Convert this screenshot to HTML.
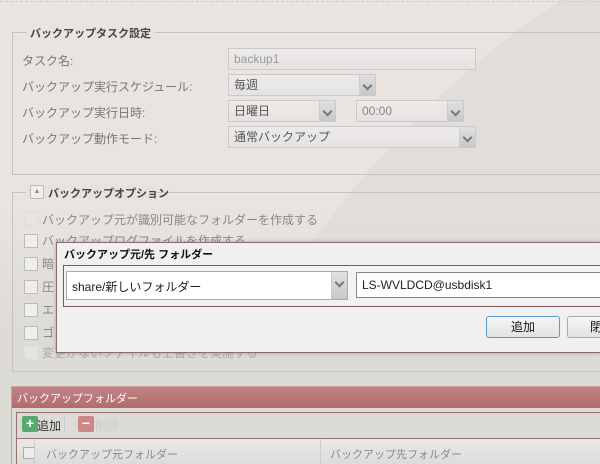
<!DOCTYPE html>
<html style="width:600px;height:464px;overflow:hidden"><head><meta charset="utf-8"><style>
*{box-sizing:border-box;margin:0;padding:0}
body{width:600px;height:464px;overflow:hidden;position:relative;background:#e9e4df;font-family:"Liberation Sans","Noto Sans CJK JP",sans-serif;font-size:12px;color:#777}
.a{position:absolute}
.clip{left:0;top:0;width:600px;height:464px;overflow:hidden}
.gray{left:135px;top:-165px;width:1930px;height:1930px;border-radius:50%;background:#e1ded9;}
.lower{left:0;top:200px;width:600px;height:264px;background:linear-gradient(180deg,rgba(222,220,215,0),#dddbd6 50%)}
.fs{border:1px solid #c8c2bc}
.leg{font-weight:bold;font-size:11px;color:#444;padding:0 4px}
.lab{left:22px;font-size:12px;color:#777}
.inp{background:linear-gradient(#eeeaea,#e4e2e2);border:1px solid #cdc9c6;font-size:12px;color:#555;padding:3px 5px;line-height:14px}
.dd{position:absolute;right:0;top:0;bottom:0;width:16px;background:linear-gradient(#e0e0e0,#c8c8c8);border-left:1px solid #ccc}
.dd:after{content:"";position:absolute;left:4px;top:7px;width:5px;height:5px;border-right:2px solid #777;border-bottom:2px solid #777;transform:rotate(45deg)}
.cb{left:24px;width:14px;height:14px;border:1px solid #bbb;background:#eee}
.ct{left:42px;font-size:12px;color:#888}
</style></head><body>
<div class="a clip"><div class="a gray"></div><div class="a lower"></div></div>
<div class="a" style="left:0;top:1px;width:600px;border-top:1px dashed #ccc"></div>

<div class="a fs" style="left:12px;top:32px;width:588px;height:143px;border-right:none"></div>
<div class="a leg" style="left:26px;top:25px;background:#e9e4df">バックアップタスク設定</div>
<div class="a lab" style="top:52px">タスク名:</div>
<div class="a lab" style="top:78px">バックアップ実行スケジュール:</div>
<div class="a lab" style="top:104px">バックアップ実行日時:</div>
<div class="a lab" style="top:130px">バックアップ動作モード:</div>
<div class="a inp" style="left:228px;top:48px;width:248px;height:22px;color:#999">backup1</div>
<div class="a inp" style="left:228px;top:74px;width:148px;height:22px">毎週<div class="dd"></div></div>
<div class="a inp" style="left:228px;top:100px;width:108px;height:22px">日曜日<div class="dd"></div></div>
<div class="a inp" style="left:356px;top:100px;width:108px;height:22px;color:#888">00:00<div class="dd"></div></div>
<div class="a inp" style="left:228px;top:126px;width:248px;height:22px">通常バックアップ<div class="dd"></div></div>

<div class="a fs" style="left:12px;top:192px;width:588px;height:180px;border-right:none"></div>
<div class="a" style="left:26px;top:185px;width:130px;height:14px;background:#e6e2dd"></div>
<div class="a" style="left:30px;top:185px;width:14px;height:14px;border:1px solid #bbb;background:#eee;font-size:7px;text-align:center;line-height:12px;color:#888">▲</div>
<div class="a leg" style="left:44px;top:185px">バックアップオプション</div>
<div class="a cb" style="top:211px;border-color:#ddd;background:#e6e3e0"></div><div class="a ct" style="top:211px">バックアップ元が識別可能なフォルダーを作成する</div>
<div class="a cb" style="top:234px"></div><div class="a ct" style="top:232px">バックアップログファイルを作成する</div>
<div class="a cb" style="top:257px"></div><div class="a ct" style="top:255px">暗</div>
<div class="a cb" style="top:280px"></div><div class="a ct" style="top:278px">圧</div>
<div class="a cb" style="top:303px"></div><div class="a ct" style="top:301px">エ</div>
<div class="a cb" style="top:326px"></div><div class="a ct" style="top:324px">ゴ</div>
<div class="a cb" style="top:346px;border-color:#ddd;background:#e6e3e0"></div><div class="a ct" style="top:344px;color:#aaa">変更がないファイルも上書きを実施する</div>

<div class="a" style="left:56px;top:242px;width:544px;height:111px;background:#f0f0f0;border:1px solid #8a6a6a;border-right:none;box-shadow:0 0 4px rgba(0,0,0,.25)"></div>
<div class="a" style="left:64px;top:246px;font-size:11px;font-weight:bold;color:#111">バックアップ元/先 フォルダー</div>
<div class="a" style="left:63px;top:265px;width:537px;height:42px;border:1px solid #7a5a5a;border-right:none;background:#f2f2f2"></div>
<div class="a" style="left:66px;top:271px;width:282px;height:29px;border:1px solid #aaa;background:#fff;font-size:12px;color:#222;padding:6px 5px">share/新しいフォルダー<div class="dd" style="width:16px"></div></div>
<div class="a" style="left:356px;top:272px;width:244px;height:26px;border:1px solid #888;border-right:none;background:#fff;font-size:12px;color:#222;padding:5px 5px">LS-WVLDCD@usbdisk1</div>
<div class="a" style="left:486px;top:316px;width:74px;height:22px;border:1px solid #5a9ad0;border-radius:3px;background:linear-gradient(#f6f6f6,#e2e2e2);font-size:12px;color:#111;text-align:center;line-height:20px">追加</div>
<div class="a" style="left:567px;top:316px;width:33px;height:22px;border:1px solid #aaa;border-right:none;border-radius:3px 0 0 3px;background:linear-gradient(#f6f6f6,#e2e2e2);font-size:12px;color:#111;padding-left:22px;line-height:20px;overflow:hidden;white-space:nowrap">閉</div>

<div class="a" style="left:11px;top:386px;width:589px;height:78px;background:#dcdad6;border:1px solid #d0a0a0;border-right:none;border-bottom:none"></div>
<div class="a" style="left:12px;top:387px;width:588px;height:21px;background:linear-gradient(#c08484,#b06c6c);color:#fff;font-size:11px;padding:3px 5px">バックアップフォルダー</div>
<div class="a" style="left:16px;top:412px;width:584px;height:52px;border:1px solid #9a7070;border-right:none;border-bottom:none;background:#dddbd7"></div>
<div class="a" style="left:22px;top:416px;width:16px;height:16px;background:#5aaa70;border-radius:2px;color:#fff;font-size:14px;line-height:15px;text-align:center;font-weight:bold">+</div>
<div class="a" style="left:37px;top:417px;font-size:12px;color:#333">追加</div>
<div class="a" style="left:64px;top:416px;height:16px;border-left:1px solid #ccc"></div>
<div class="a" style="left:78px;top:416px;width:16px;height:16px;background:#c88;border-radius:2px;color:#fff;font-size:14px;line-height:15px;text-align:center;font-weight:bold">−</div>
<div class="a" style="left:95px;top:417px;font-size:12px;color:#ccc">削除</div>
<div class="a" style="left:17px;top:438px;width:583px;height:26px;border-top:1px solid #9a7070;background:linear-gradient(#ebe9e7,#dedcda)"></div>
<div class="a" style="left:23px;top:447px;width:12px;height:12px;border:1px solid #aaa;background:#eee"></div>
<div class="a" style="left:34px;top:439px;height:25px;border-left:1px solid #ccc"></div>
<div class="a" style="left:46px;top:446px;font-size:11px;color:#888">バックアップ元フォルダー</div>
<div class="a" style="left:320px;top:439px;height:25px;border-left:1px solid #ccc"></div>
<div class="a" style="left:330px;top:446px;font-size:11px;color:#888">バックアップ先フォルダー</div>
</body></html>
